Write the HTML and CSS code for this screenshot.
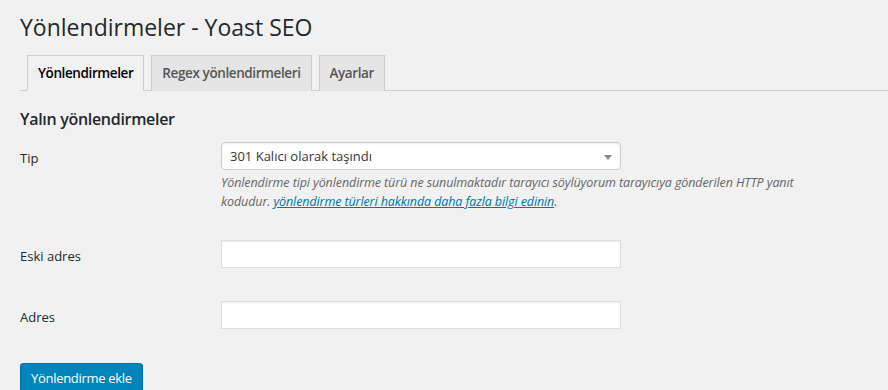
FILE: index.html
```html
<!DOCTYPE html>
<html>
  <head>
    <meta charset="UTF-8">
    <title>Yönlendirmeler - Yoast SEO</title>
    <link rel="stylesheet" href="styles.css">
  </head>
  <body>
    <div class="wrap">
      <h1 class="page-title">Yönlendirmeler - Yoast SEO</h1>

      <!-- Tabs -->
      <div class="nav-tabs">
        <a class="nav-tab active" href="#">Yönlendirmeler</a>
        <a class="nav-tab" href="#">Regex yönlendirmeleri</a>
        <a class="nav-tab" href="#">Ayarlar</a>
      </div>

      <h2 class="section-title">Yalın yönlendirmeler</h2>

      <form class="redirect-form">
        <div class="form-row row-type">
          <label class="form-label">Tip</label>
          <div class="form-field">
            <div class="select-box">
              <span>301 Kalıcı olarak taşındı</span>
              <span class="select-arrow"></span>
            </div>
            <p class="description">Yönlendirme tipi yönlendirme türü ne sunulmaktadır tarayıcı söylüyorum tarayıcıya gönderilen HTTP yanıt kodudur. <a href="#">yönlendirme türleri hakkında daha fazla bilgi edinin</a>.</p>
          </div>
        </div>
        <div class="form-row row-old">
          <label class="form-label">Eski adres</label>
          <div class="form-field"><input class="text-input" type="text"></div>
        </div>
        <div class="form-row row-new">
          <label class="form-label">Adres</label>
          <div class="form-field"><input class="text-input" type="text"></div>
        </div>
        <button class="button-primary" type="button">Yönlendirme ekle</button>
      </form>
    </div>
  </body>
</html>
```

FILE: styles.css
```css
/* Page */
body {
  margin: 0;
  background-color: #f1f1f1;
  color: #444;
  font-family: "Open Sans", "Noto Sans", sans-serif;
  font-size: 13px;
}

.wrap {
  padding: 0 0 0 20px;
}

.page-title {
  margin: 0;
  padding: 13px 0 0 0;
  font-size: 23px;
  font-weight: 400;
  line-height: 29px;
  color: #23282d;
}

/* Tabs */
.nav-tabs {
  display: flex;
  gap: 7px;
  margin-top: 13px;
  padding-left: 7px;
  border-bottom: 1px solid #ccc;
}

.nav-tab {
  display: block;
  margin-bottom: -1px;
  padding: 5px 10px;
  line-height: 24px;
  font-size: 13.5px;
  font-weight: 600;
  letter-spacing: -0.4px;
  color: #555;
  text-decoration: none;
  background-color: #e5e5e5;
  border: 1px solid #ccc;
  border-bottom: none;
}

.nav-tab.active {
  background-color: #f1f1f1;
  color: #000;
  border-bottom: 1px solid #f1f1f1;
}

.section-title {
  margin: 16px 0 0 0;
  font-size: 16px;
  font-weight: 600;
  letter-spacing: -0.3px;
  line-height: 24px;
  color: #23282d;
}

/* Form */
.redirect-form {
  margin-top: 11px;
}

.form-row {
  display: grid;
  grid-template-columns: 201px 1fr;
}

.form-label {
  padding-top: 7px;
  line-height: 18px;
  color: #23282d;
}

.row-old {
  margin-top: 29px;
}

.row-new {
  margin-top: 33px;
}

.select-box {
  position: relative;
  box-sizing: border-box;
  width: 400px;
  height: 28px;
  padding: 0 8px;
  line-height: 26px;
  background: #fff;
  border: 1px solid #ccc;
  border-radius: 4px;
  box-shadow: inset 0 1px 2px rgba(0, 0, 0, 0.07);
  color: #32373c;
}

.select-arrow {
  position: absolute;
  right: 8px;
  top: 12px;
  border-left: 4px solid transparent;
  border-right: 4px solid transparent;
  border-top: 5px solid #888;
}

.description {
  max-width: 610px;
  margin: 3px 0 0 0;
  line-height: 19px;
  font-size: 12.5px;
  letter-spacing: -0.1px;
  font-style: italic;
  color: #666;
}

.description a {
  color: #0073aa;
}

.text-input {
  display: block;
  box-sizing: border-box;
  width: 400px;
  height: 28px;
  margin: 0;
  background: #fff;
  border: 1px solid #ddd;
  box-shadow: inset 0 1px 2px rgba(0, 0, 0, 0.07);
}

/* Button */
.button-primary {
  margin-top: 34px;
  height: 30px;
  padding: 0 10px 2px;
  font-family: inherit;
  font-size: 13px;
  letter-spacing: -0.3px;
  line-height: 28px;
  color: #fff;
  background: #0085ba;
  border: 1px solid #0073aa;
  border-radius: 3px;
  box-shadow: 0 1px 0 #006799;
}
```
